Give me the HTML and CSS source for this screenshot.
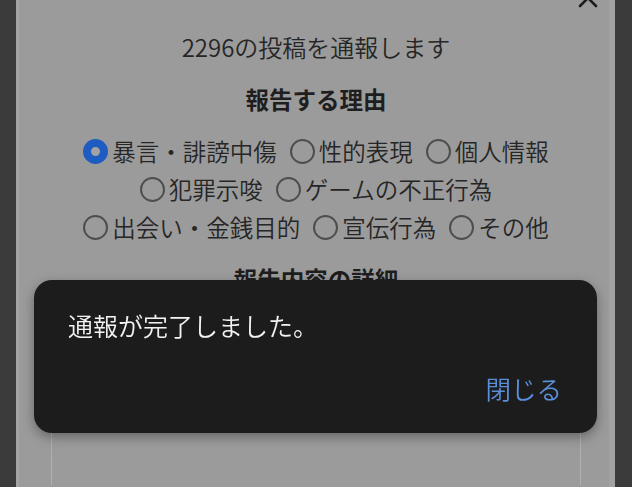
FILE: index.html
```html
<!DOCTYPE html>
<html lang="ja">
<head>
<meta charset="utf-8">
<title>通報</title>
<link rel="stylesheet" href="styles.css">
</head>
<body>
<div class="page">
  <div class="panel">
    <button class="close" aria-label="閉じる">
      <svg width="22" height="22" viewBox="0 0 22 22"><path d="M3 3 L19 19 M19 3 L3 19" stroke="#1e1e1e" stroke-width="2.6" stroke-linecap="round" fill="none"/></svg>
    </button>
    <p class="title">2296の投稿を通報します</p>
    <h2 class="heading">報告する理由</h2>
    <div class="reasons">
      <div class="row">
        <label class="opt"><span class="radio checked"></span>暴言・誹謗中傷</label>
        <label class="opt"><span class="radio"></span>性的表現</label>
        <label class="opt"><span class="radio"></span>個人情報</label>
      </div>
      <div class="row">
        <label class="opt"><span class="radio"></span>犯罪示唆</label>
        <label class="opt"><span class="radio"></span>ゲームの不正行為</label>
      </div>
      <div class="row">
        <label class="opt"><span class="radio"></span>出会い・金銭目的</label>
        <label class="opt"><span class="radio"></span>宣伝行為</label>
        <label class="opt"><span class="radio"></span>その他</label>
      </div>
    </div>
    <h2 class="heading detail">報告内容の詳細</h2>
    <div class="textarea"></div>
  </div>
</div>
<div class="snackbar">
  <p class="message">通報が完了しました。</p>
  <div class="actions"><span class="action">閉じる</span></div>
</div>
</body>
</html>
```
FILE: styles.css
```css
html, body {
  margin: 0;
  padding: 0;
  height: 100%;
  overflow: hidden;
}
body {
  background: #3b3b3b;
  font-family: "Noto Sans CJK JP", "Noto Sans", sans-serif;
  color: #262626;
}
.page {
  padding: 0 17px 0 16px;
  height: 100%;
}
.panel {
  position: relative;
  background: #9b9b9b;
  height: 100%;
  overflow: hidden;
  padding: 30px 34px 0 35px;
  box-sizing: border-box;
  box-shadow: inset 3px 0 0 #a4a4a4, inset -6px 0 0 #a2a2a2;
  text-align: center;
}
.close {
  position: absolute;
  top: -13px;
  left: 561px;
  padding: 0;
  border: 0;
  background: none;
}
.title {
  margin: 0;
  font-size: 24px;
  line-height: 34px;
  font-weight: 350;
}
.heading {
  margin: 18px 0 0;
  font-size: 23.5px;
  line-height: 34px;
  font-weight: 700;
  color: #1e1e1e;
}
.reasons {
  margin-top: 16px;
}
.row {
  display: flex;
  justify-content: center;
  align-items: center;
  height: 38px;
  gap: 13px;
  font-size: 23.5px;
  font-weight: 350;
}
.opt {
  display: flex;
  align-items: center;
  gap: 4px;
  white-space: nowrap;
}
.radio {
  width: 25px;
  height: 25px;
  box-sizing: border-box;
  border-radius: 50%;
  border: 2px solid #4e4e4e;
  flex: none;
}
.radio.checked {
  border: 8px solid #1f5cc2;
  background: #a3a3a3;
}
.heading.detail {
  margin-top: 16px;
}
.textarea {
  margin-top: 8px;
  height: 180px;
  border: 1px solid #b0b0b0;
  border-bottom: 0;
  border-radius: 2px 2px 0 0;
}
.snackbar {
  position: fixed;
  left: 34px;
  top: 280px;
  width: 563px;
  height: 153px;
  box-sizing: border-box;
  padding: 30px 35px 30px 34px;
  background: #1c1c1c;
  border-radius: 18px;
  box-shadow: 0 4px 12px rgba(0,0,0,0.35);
  display: flex;
  flex-direction: column;
  justify-content: space-between;
}
.message {
  margin: 0;
  color: #f2f2f2;
  font-size: 25px;
  line-height: 30px;
  font-weight: 350;
}
.actions {
  display: flex;
  justify-content: flex-end;
}
.action {
  color: #5b8ed9;
  font-size: 25.5px;
  line-height: 30px;
  font-weight: 350;
}
```
